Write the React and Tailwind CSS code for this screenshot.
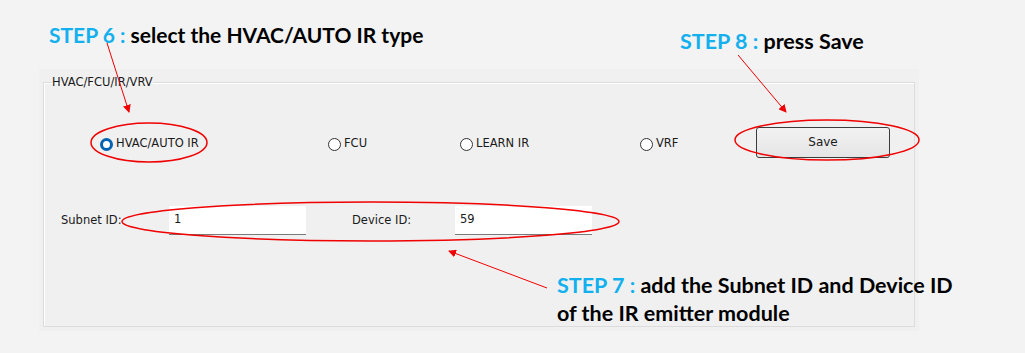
import React from 'react';

const RED = '#f00000';

function Radio({ label, checked, width }) {
  return (
    <label className={`flex items-center gap-[3px] ${width}`}>
      <span
        className={
          checked
            ? 'w-[13px] h-[13px] rounded-full border-[3.5px] border-[#0063b1] bg-white'
            : 'w-[13px] h-[13px] rounded-full border border-[#333333] bg-white'
        }
      />
      <span>{label}</span>
    </label>
  );
}

function Field({ value }) {
  return (
    <div className="w-[137px] h-[29px] bg-white border-b border-[#7a7a7a] flex items-center pl-[5px]">
      {value}
    </div>
  );
}

export default function App() {
  return (
    <div className="relative w-[1025px] h-[353px] overflow-hidden bg-[#f3f3f3] pt-[69px] pl-[39px] text-[11.5px] text-[#1a1a1a] font-['DejaVu_Sans',sans-serif]">
      {/* window panel */}
      <div className="w-[880px] h-[262px] bg-[#f0f0f0] pl-[4px] pt-[7px]">
        <fieldset className="w-[872px] h-[251px] border border-[#dcdcdc] shadow-[inset_1px_1px_0_#ffffff] m-0 pl-[8px] pr-0 pb-0 pt-0">
          <legend className="px-0 leading-[13px]">HVAC/FCU/IR/VRV</legend>

          <div className="flex items-center pl-[48px] mt-[41px]">
            <Radio label="HVAC/AUTO IR" checked width="w-[228px]" />
            <Radio label="FCU" width="w-[132px]" />
            <Radio label="LEARN IR" width="w-[180px]" />
            <Radio label="VRF" width="w-[116px]" />
            <button className="w-[134px] h-[31px] -mt-[3px] rounded-[3px] border border-[#3c3c3c] bg-gradient-to-b from-[#f2f2f2] to-[#e5e5e5] text-[12px] pb-[2px]">
              Save
            </button>
          </div>

          <div className="flex items-center mt-[48px] pl-[9px]">
            <span className="w-[108px]">Subnet ID:</span>
            <Field value="1" />
            <span className="ml-[46px] w-[103px]">Device ID:</span>
            <Field value="59" />
          </div>
        </fieldset>
      </div>

      {/* annotations */}
      <svg className="absolute inset-0 pointer-events-none" width="1025" height="353">
        <defs>
          <marker id="head" markerWidth="8" markerHeight="8" refX="7" refY="4" orient="auto" markerUnits="userSpaceOnUse">
            <path d="M0,0 L8,4 L0,8 Z" fill={RED} />
          </marker>
        </defs>
        <ellipse cx="149" cy="142.5" rx="58" ry="19.5" fill="none" stroke={RED} strokeWidth="1.5" />
        <ellipse cx="827" cy="140" rx="92" ry="20" fill="none" stroke={RED} strokeWidth="1.5" />
        <ellipse cx="370.5" cy="221.5" rx="248.5" ry="19.5" fill="none" stroke={RED} strokeWidth="1.5" />
        <line x1="107" y1="43" x2="129" y2="112" stroke={RED} strokeWidth="1" markerEnd="url(#head)" />
        <line x1="738" y1="55" x2="786" y2="112" stroke={RED} strokeWidth="1" markerEnd="url(#head)" />
        <line x1="547" y1="288" x2="449" y2="251" stroke={RED} strokeWidth="1" markerEnd="url(#head)" />
      </svg>

      <div className="absolute left-[49px] top-[22px] text-[21px] leading-[26px] font-bold font-['Lato',sans-serif] text-black">
        <span className="text-[#12b0ee]">STEP 6 : </span>select the HVAC/AUTO IR type
      </div>
      <div className="absolute left-[680px] top-[28px] text-[21.5px] leading-[26px] font-bold font-['Lato',sans-serif] text-black">
        <span className="text-[#12b0ee]">STEP 8 : </span>press Save
      </div>
      <div className="absolute left-[557px] top-[271px] text-[21.5px] leading-[28px] font-bold font-['Lato',sans-serif] text-black">
        <span className="text-[#12b0ee]">STEP 7 : </span>add the Subnet ID and Device ID
        <br />
        of the IR emitter module
      </div>
    </div>
  );
}
